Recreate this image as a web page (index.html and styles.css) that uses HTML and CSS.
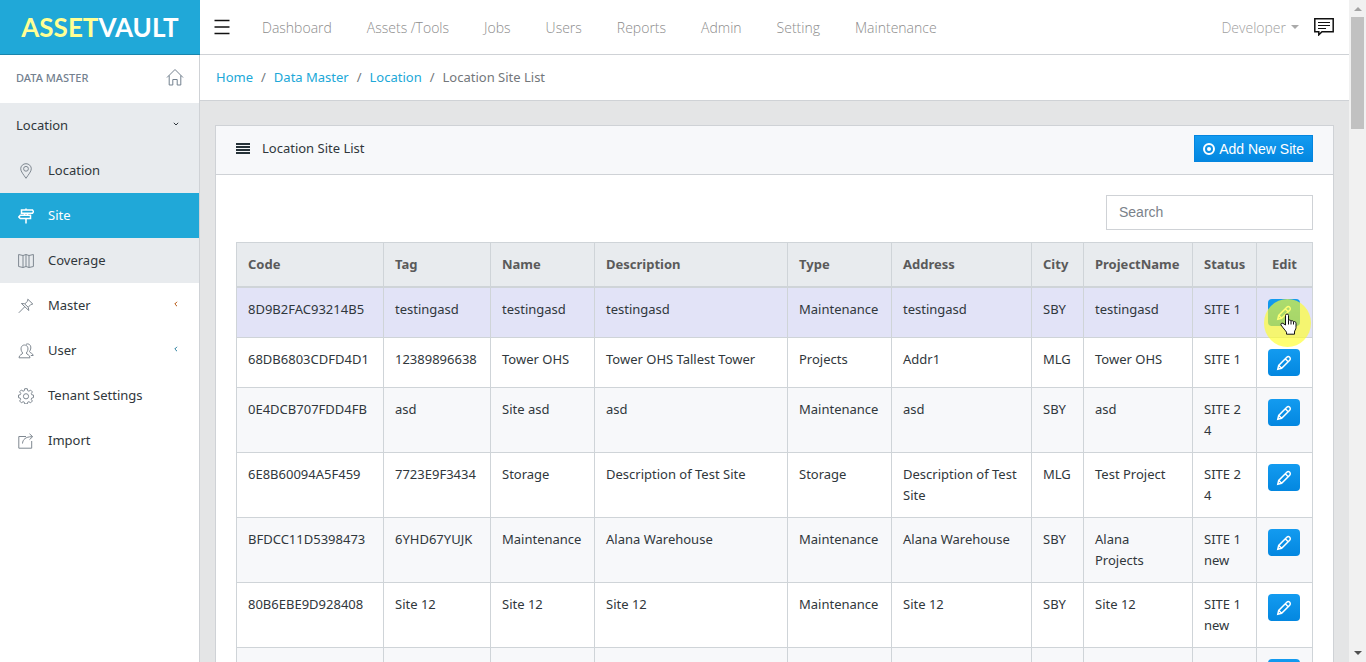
FILE: index.html
```html
<!DOCTYPE html>
<html lang="en">
<head>
<meta charset="utf-8">
<title>AssetVault - Location Site List</title>
<link rel="stylesheet" href="styles.css">
</head>
<body>
<svg class="defs" aria-hidden="true">
  <symbol id="pencil" viewBox="0 0 16 16"><path d="M1.800 14.200l.9-3.800L10.800 2.300a2 2 0 0 1 2.900 2.900L5.600 13.300zM2.700 10.400l2.900 2.900M9.300 3.800l2.900 2.900"/></symbol>
</svg>
<div class="window">
<div class="app">
  <header class="topbar">
    <a class="logo" href="#"><span class="logo-first">ASSET</span>VAULT</a>
    <button class="menu-toggle" aria-label="Toggle menu"><svg viewBox="0 0 16 16"><path d="M.5 1.500h15M.5 8h15M.5 14.500h15"/></svg></button>
    <nav class="topnav">
      <a href="#">Dashboard</a><a href="#">Assets /Tools</a><a href="#">Jobs</a><a href="#">Users</a><a href="#">Reports</a><a href="#">Admin</a><a href="#">Setting</a><a href="#">Maintenance</a>
    </nav>
    <button class="account">Developer<span class="caret"></span></button>
    <button class="messages" aria-label="Messages"><svg viewBox="0 0 20 18"><path d="M.8.8h18.400v12.900H8l-3.200 3.100v-3.100h-4z"/><path class="lines" d="M4 4.500h12M4 7.500h12M4 10.500h8"/></svg></button>
  </header>
  <div class="columns">
    <aside class="sidebar">
      <div class="side-title"><span>DATA MASTER</span>
        <svg class="home" viewBox="0 0 18 18"><path d="M1 9.500L9 1.500l8 8M3.200 7.500v9.500h3.600v-5.500h4.400v5.500h3.600V7.500"/></svg>
      </div>
      <nav>
        <div class="group">
          <a class="item" href="#"><span class="label">Location</span><svg class="chev" viewBox="0 0 6 6"><path d="M.8 1.800L3 4l2.200-2.200"/></svg></a>
          <a class="item" href="#"><svg class="icon" viewBox="0 0 16 16"><path d="M8 15.300C5.500 11.500 2.700 8.500 2.700 5.800a5.300 5.100 0 0 1 10.600 0C13.300 8.500 10.500 11.500 8 15.300z"/><circle cx="8" cy="5.800" r="2.400"/></svg><span class="label">Location</span></a>
          <a class="item active" href="#"><svg class="icon" viewBox="0 0 16 16"><path d="M3.500 2h11l1 1.600-1 1.700h-11zM12.500 7.200H2.300L.8 8.900l1.500 1.600h10.200zM8 .5V2M6.500 5.300v1.900M9.500 5.300v1.900M8 10.500v5"/></svg><span class="label">Site</span></a>
          <a class="item" href="#"><svg class="icon" viewBox="0 0 16 16"><path d="M.6 1.500l4.400 1 3-1 3 1 4.400-1v12l-4.400 1-3-1-3 1-4.400-1zM5 2.500v12M8 1.500v12M11 2.500v12"/></svg><span class="label">Coverage</span></a>
        </div>
        <a class="item" href="#"><svg class="icon" viewBox="0 0 16 16"><path d="M9.800 1.200l5 4.800-2 .5-2.500 2.700.5 3.300-7.400-7 3.500.3 2.700-2.600zM6.500 9L.8 14.800M7 6.300l3 2.700"/></svg><span class="label">Master</span><svg class="chev warm" viewBox="0 0 6 6"><path d="M4 .8L1.800 3 4 5.200"/></svg></a>
        <a class="item" href="#"><svg class="icon" viewBox="0 0 16 16"><path d="M4.700 10C1.700 6.500 3 2 6.500 2s4.800 4.500 1.800 8c.2 1.700 3.700 1.500 3.700 4.800H1c0-3.300 3.500-3.100 3.700-4.800zM8 1.300c3.500-1.800 6.700 2.500 3.500 7.200.2 1.600 3.500 1.600 3.700 4h-2.400"/></svg><span class="label">User</span><svg class="chev cool" viewBox="0 0 6 6"><path d="M4 .8L1.800 3 4 5.200"/></svg></a>
        <a class="item" href="#"><svg class="icon" viewBox="0 0 16 16"><path d="M6.700.7h2.600l.4 2 1.200.5 1.700-1.100 1.800 1.800-1.100 1.700.5 1.200 1.700.3v2.500l-1.800.5-.5 1.200 1.200 1.700-1.800 1.800-1.700-1.100-1.200.5-.4 1.700H6.700l-.4-1.700-1.200-.5-1.700 1.100L1.600 13l1.100-1.700-.5-1.200-1.700-.4V7.100l1.800-.4.5-1.200-1.200-1.700L3.400 2l1.700 1.200 1.200-.5z"/><circle cx="8" cy="8.300" r="2.600"/></svg><span class="label">Tenant Settings</span></a>
        <a class="item" href="#"><svg class="icon" viewBox="0 0 16 16"><path d="M8 3.500H.8v11.700h12.900V8M4.500 10.500c.3-4 3-6.800 9.500-6.800M11.500.8l3.200 2.900-3.200 2.900"/></svg><span class="label">Import</span></a>
      </nav>
    </aside>
    <main class="main">
      <nav class="crumbs" aria-label="Breadcrumb"><a href="#">Home</a><span>/</span><a href="#">Data Master</a><span>/</span><a href="#">Location</a><span>/</span><span>Location Site List</span></nav>
      <section class="card">
        <div class="card-head">
          <svg class="bars" viewBox="0 0 14 11"><path d="M0 1h14M0 4h14M0 7h14M0 10h14"/></svg>
          <span class="card-title">Location Site List</span>
          <button class="add"><svg viewBox="0 0 12 12"><circle cx="6" cy="6" r="5"/><circle class="dot" cx="6" cy="6" r="2"/></svg>Add New Site</button>
        </div>
        <div class="card-body">
          <input class="search" type="text" placeholder="Search" aria-label="Search">
          <table class="sites">
            <colgroup><col class="c-code"><col class="c-tag"><col class="c-mid"><col><col class="c-mid"><col class="c-address"><col class="c-city"><col class="c-project"><col class="c-status"><col class="c-edit"></colgroup>
            <thead><tr><th>Code</th><th>Tag</th><th>Name</th><th>Description</th><th>Type</th><th>Address</th><th>City</th><th>ProjectName</th><th>Status</th><th class="center">Edit</th></tr></thead>
            <tbody>
              <tr class="hovered"><td>8D9B2FAC93214B5</td><td>testingasd</td><td>testingasd</td><td>testingasd</td><td>Maintenance</td><td>testingasd</td><td>SBY</td><td>testingasd</td><td>SITE 1</td><td><div class="edit-wrap"><button class="edit" aria-label="Edit"><svg><use href="#pencil"/></svg></button><div class="pointer"><svg viewBox="0 0 17 22"><path d="M5.500 12V2.500a1.500 1.500 0 0 1 3 0V7.500c.8-.8 2.300-.5 2.500.5.800-.7 2.300-.3 2.500.8 1-.6 2.500 0 2.500 1.400v4.300c0 2-1.500 3-1.500 4.500v2.200H6.500v-2C5.500 17.500 3 15 1 12c-.6-1.200.8-2.400 2-1.600z"/><path d="M8.500 7.500v4M11 8v3.500M13.500 9v2.500"/></svg></div></div></td></tr>
              <tr><td>68DB6803CDFD4D1</td><td>12389896638</td><td>Tower OHS</td><td>Tower OHS Tallest Tower</td><td>Projects</td><td>Addr1</td><td>MLG</td><td>Tower OHS</td><td>SITE 1</td><td><button class="edit" aria-label="Edit"><svg><use href="#pencil"/></svg></button></td></tr>
              <tr><td>0E4DCB707FDD4FB</td><td>asd</td><td>Site asd</td><td>asd</td><td>Maintenance</td><td>asd</td><td>SBY</td><td>asd</td><td>SITE 2<br>4</td><td><button class="edit" aria-label="Edit"><svg><use href="#pencil"/></svg></button></td></tr>
              <tr><td>6E8B60094A5F459</td><td>7723E9F3434</td><td>Storage</td><td>Description of Test Site</td><td>Storage</td><td>Description of Test Site</td><td>MLG</td><td>Test Project</td><td>SITE 2<br>4</td><td><button class="edit" aria-label="Edit"><svg><use href="#pencil"/></svg></button></td></tr>
              <tr><td>BFDCC11D5398473</td><td>6YHD67YUJK</td><td>Maintenance</td><td>Alana Warehouse</td><td>Maintenance</td><td>Alana Warehouse</td><td>SBY</td><td>Alana<br>Projects</td><td>SITE 1 new</td><td><button class="edit" aria-label="Edit"><svg><use href="#pencil"/></svg></button></td></tr>
              <tr><td>80B6EBE9D928408</td><td>Site 12</td><td>Site 12</td><td>Site 12</td><td>Maintenance</td><td>Site 12</td><td>SBY</td><td>Site 12</td><td>SITE 1 new</td><td><button class="edit" aria-label="Edit"><svg><use href="#pencil"/></svg></button></td></tr>
              <tr><td></td><td></td><td></td><td></td><td></td><td></td><td></td><td></td><td></td><td><button class="edit" aria-label="Edit"><svg><use href="#pencil"/></svg></button></td></tr>
            </tbody>
          </table>
        </div>
      </section>
    </main>
  </div>
</div>
<div class="scrollbar" aria-hidden="true"><span class="arrow up"></span><span class="thumb"></span><span class="arrow down"></span></div>
</div>
</body>
</html>
```
FILE: styles.css
```css
* { box-sizing: border-box; }
body {
  margin: 0;
  font-family: "Noto Sans", "Open Sans", sans-serif;
  font-size: 13px;
  line-height: 21px;
  color: #30373c;
  background: #e4e5e6;
}
a { color: inherit; text-decoration: none; }
button { font: inherit; margin: 0; padding: 0; border: 0; background: none; cursor: pointer; }
svg { display: block; fill: none; stroke: currentColor; }
.defs { position: absolute; width: 0; height: 0; }
.window { display: flex; height: 100vh; overflow: hidden; }
.app { flex: 1; min-width: 0; }

.topbar { display: flex; align-items: center; height: 55px; background: #fff; border-bottom: 1px solid #cfd2d6; }
.logo {
  display: flex; align-items: center; justify-content: center;
  width: 200px; height: 55px; margin-bottom: -1px;
  background: #20a8d8; border-bottom: 1px solid #1985ac; color: #fff;
  font: bold 26px Lato, "Liberation Sans", sans-serif;
}
.logo-first { color: #ffff94; }
.menu-toggle { margin-left: 14px; color: #111; }
.menu-toggle svg { width: 16px; height: 16px; stroke-width: 1.500; }
.topnav { display: flex; flex: 1; gap: 35px; margin-left: 32px; color: #8c8c8c; font-family: "Open Sans", sans-serif; font-size: 14px; font-weight: 300; }
.account { display: flex; align-items: center; gap: 5px; color: #a0a0a0; font-family: "Open Sans", sans-serif; font-size: 14px; font-weight: 300; }
.caret { border: 4px solid transparent; border-top-color: #aaa; border-bottom: 0; }
.messages { margin: 0 15px; color: #111; }
.messages svg { width: 20px; height: 18px; stroke-width: 1.500; }
.messages .lines { stroke-width: 1; }

.columns { display: flex; align-items: stretch; }
.sidebar { flex: none; width: 200px; min-height: 100vh; background: #fff; border-right: 1px solid #cfd2d6; }
.side-title { display: flex; align-items: center; justify-content: space-between; height: 48px; padding: 0 15px 4px 16px; color: #73818f; font-size: 11px; font-weight: 500; }
.home { width: 18px; height: 18px; }
.group { background: #e8ebee; }
.item { display: flex; align-items: center; height: 45px; padding: 0 20px 0 16px; }
.label { flex: 1; }
.icon { width: 16px; height: 16px; margin: 0 14px 0 2px; color: #7f8891; }
.active { background: #20a8d8; color: #fff; }
.active .icon { color: #fff; stroke-width: 1.500; }
.chev { width: 6px; height: 6px; margin-bottom: 4px; }
.warm { color: #b5530c; }
.cool { color: #2a7f9e; }

.main { flex: 1; min-width: 0; }
.crumbs { display: flex; gap: 8px; padding: 12px 16px; background: #fff; border-bottom: 1px solid #cfd2d6; color: #73777b; }
.crumbs a { color: #20a8d8; }
.card { margin: 24px 15px; background: #fff; border: 1px solid #cfd2d6; }
.card-head { display: flex; align-items: center; height: 49px; padding: 0 20px 3px; background: #f7f8fa; border-bottom: 1px solid #cfd2d6; }
.bars { width: 14px; height: 11px; stroke-width: 2; color: #263238; }
.card-title { flex: 1; margin-left: 12px; }
.add {
  display: flex; align-items: center; gap: 4px; height: 27px; padding: 0 8px;
  border: 1px solid #0485df; background: linear-gradient(#139bf0, #0387e0); color: #fff;
  font: 14px "Liberation Sans", sans-serif;
}
.add svg { width: 12px; height: 12px; stroke-width: 2; }
.dot { fill: #fff; stroke: none; }
.card-body { padding: 20px; }
.search {
  display: block; width: 207px; height: 35px; margin: 0 0 12px auto; padding: 0 12px 2px;
  border: 1px solid #cfd2d6; font: 14px "Liberation Sans", sans-serif;
}
.search::placeholder { color: #7b828a; opacity: 1; }

.sites { width: 100%; table-layout: fixed; border-collapse: collapse; }
.sites th, .sites td { padding: 11px; border: 1px solid #cfd4d8; vertical-align: top; text-align: left; }
.sites th { border-bottom-width: 2px; background: #e8ebee; color: #5a5a5a; }
.sites .center { text-align: center; }
.sites tbody tr:nth-child(odd) { background: #f7f8fa; }
.sites tbody tr.hovered { background: #e2e3f7; }
.c-code { width: 147px; }
.c-tag { width: 107px; }
.c-mid { width: 104px; }
.c-address { width: 140px; }
.c-city { width: 52px; }
.c-project { width: 109px; }
.c-status { width: 64px; }
.c-edit { width: 56px; }
.edit { display: flex; align-items: center; justify-content: center; width: 32px; height: 27px; border-radius: 4px; background: linear-gradient(#139bf0, #0387e0); color: #fff; }
.edit svg { width: 16px; height: 16px; stroke-width: 1.500; }
.edit-wrap { position: relative; }
.pointer { position: absolute; top: 0; left: -4px; width: 47px; height: 48px; border-radius: 50%; background: rgba(255, 255, 40, .65); }
.pointer svg { width: 17px; height: 22px; margin: 14px 0 0 16px; fill: #fff; stroke: #111; }

.scrollbar { display: flex; flex-direction: column; align-items: center; width: 17px; background: #f1f1f1; }
.arrow { width: 0; height: 0; border: 4px solid transparent; }
.up { margin: 3px 0 6px; border-bottom-color: #a3a3a3; }
.down { margin: auto 0 3px; border-top-color: #505050; }
.thumb { width: 13px; height: 112px; background: #c1c1c1; }
```
